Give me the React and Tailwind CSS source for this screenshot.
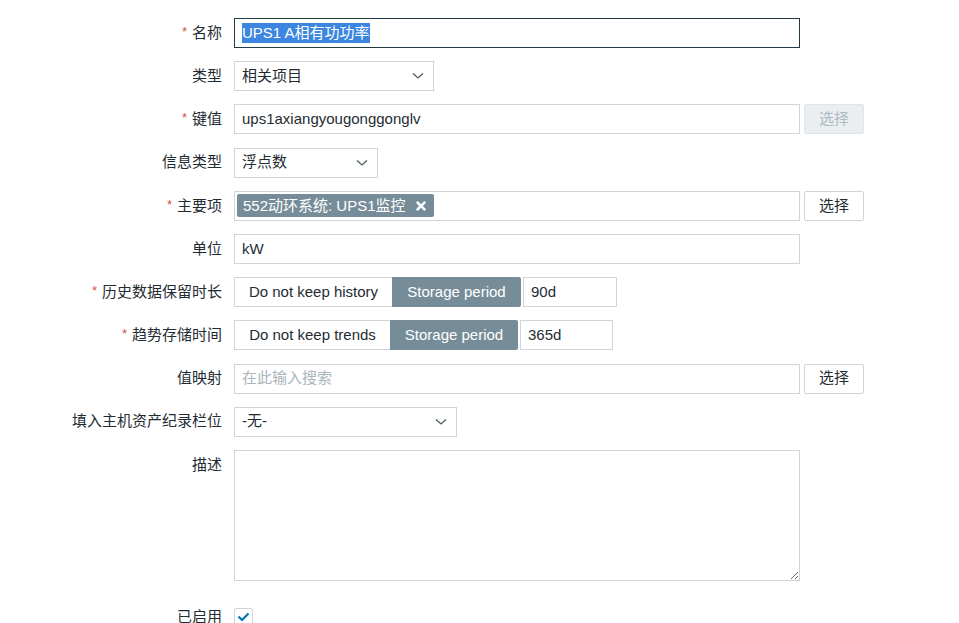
import { FaTimes } from "react-icons/fa";

const Req = () => <span className="text-[#d64e4e] mr-[5px] text-[13px] relative -top-[2px]">*</span>;

const Label = ({ children, req, top }) => (
  <div className={`w-[222px] shrink-0 text-right ${top ? "self-start pt-[4px]" : ""}`}>
    {req && <Req />}
    {children}
  </div>
);

const Chevron = () => (
  <svg width="12" height="8" viewBox="0 0 12 8" className="shrink-0">
    <path d="M1 1.5 L6 6 L11 1.5" fill="none" stroke="#4f5d64" strokeWidth="1.3" />
  </svg>
);

const Select = ({ value, w }) => (
  <div className={`${w} h-[30px] border border-[#ccd5d9] bg-white flex items-center justify-between pl-[7px] pr-[9px]`}>
    <span>{value}</span>
    <Chevron />
  </div>
);

const Btn = ({ disabled }) => (
  <div
    className={`w-[60px] h-[30px] ml-[4px] flex items-center justify-center border rounded-[2px] ${
      disabled ? "bg-[#ebeef0] border-[#dfe4e7] text-[#acbbc2]" : "bg-white border-[#ccd5d9] text-[#1f2c33]"
    }`}
  >
    选择
  </div>
);

const Segment = ({ off, offW, onW, val, valW }) => (
  <div className="flex items-center h-[30px]">
    <div className={`${offW} h-full border border-[#ccd5d9] border-r-0 bg-white flex items-center justify-center`}>{off}</div>
    <div className={`${onW} h-full bg-[#768d99] text-white flex items-center justify-center rounded-tr-[2px] rounded-br-[2px]`}>Storage period</div>
    <div className={`${valW} h-full ml-[2px] border border-[#ccd5d9] bg-white flex items-center pl-[7px]`}>{val}</div>
  </div>
);

export default function App() {
  return (
    <div
      className="w-[959px] h-[623px] overflow-hidden bg-white text-[#1f2c33] text-[15px]"
      style={{ fontFamily: '"Liberation Sans", "Noto Sans CJK SC", sans-serif' }}
    >
      <div className="pt-[18px] flex flex-col gap-[13.2px]">
        <div className="flex items-center gap-[12px]">
          <Label req>名称</Label>
          <div className="w-[566px] h-[30px] border border-[#233a45] bg-white flex items-center pl-[7px]">
            <span className="bg-[#3b86e0] text-white leading-[20px]">UPS1 A相有功功率</span>
          </div>
        </div>

        <div className="flex items-center gap-[12px]">
          <Label>类型</Label>
          <Select value="相关项目" w="w-[200px]" />
        </div>

        <div className="flex items-center gap-[12px]">
          <Label req>键值</Label>
          <div className="flex items-center">
            <div className="w-[566px] h-[30px] border border-[#ccd5d9] bg-white flex items-center pl-[7px]">ups1axiangyougonggonglv</div>
            <Btn disabled />
          </div>
        </div>

        <div className="flex items-center gap-[12px]">
          <Label>信息类型</Label>
          <Select value="浮点数" w="w-[144px]" />
        </div>

        <div className="flex items-center gap-[12px]">
          <Label req>主要项</Label>
          <div className="flex items-center">
            <div className="w-[566px] h-[30px] border border-[#ccd5d9] bg-white flex items-center pl-[2px]">
              <div className="h-[23px] bg-[#768d99] text-white flex items-center pl-[6px] pr-[6px] rounded-[2px] gap-[8px]">
                <span>552动环系统: UPS1监控</span>
                <FaTimes className="text-[14px]" />
              </div>
            </div>
            <Btn />
          </div>
        </div>

        <div className="flex items-center gap-[12px]">
          <Label>单位</Label>
          <div className="w-[566px] h-[30px] border border-[#ccd5d9] bg-white flex items-center pl-[7px]">kW</div>
        </div>

        <div className="flex items-center gap-[12px]">
          <Label req>历史数据保留时长</Label>
          <Segment off="Do not keep history" offW="w-[158px]" onW="w-[129px]" val="90d" valW="w-[94px]" />
        </div>

        <div className="flex items-center gap-[12px]">
          <Label req>趋势存储时间</Label>
          <Segment off="Do not keep trends" offW="w-[156px]" onW="w-[128px]" val="365d" valW="w-[93px]" />
        </div>

        <div className="flex items-center gap-[12px]">
          <Label>值映射</Label>
          <div className="flex items-center">
            <div className="w-[566px] h-[30px] border border-[#ccd5d9] bg-white flex items-center pl-[7px] text-[#a9b5bb]">在此输入搜索</div>
            <Btn />
          </div>
        </div>

        <div className="flex items-center gap-[12px]">
          <Label>填入主机资产纪录栏位</Label>
          <Select value="-无-" w="w-[223px]" />
        </div>

        <div className="flex gap-[12px]">
          <Label top>描述</Label>
          <textarea
            readOnly
            className="w-[566px] h-[131px] border border-[#ccd5d9] bg-white resize outline-none"
            defaultValue=""
          />
        </div>

        <div className="flex items-center gap-[12px] mt-[12px]">
          <Label>已启用</Label>
          <div className="w-[19px] h-[19px] border border-[#ccd5d9] bg-white flex items-center justify-center rounded-[2px]">
            <svg width="13" height="10" viewBox="0 0 13 10">
              <path d="M1.5 4.5 L5 8 L11.5 1.5" fill="none" stroke="#0275b8" strokeWidth="2.2" />
            </svg>
          </div>
        </div>
      </div>
    </div>
  );
}
